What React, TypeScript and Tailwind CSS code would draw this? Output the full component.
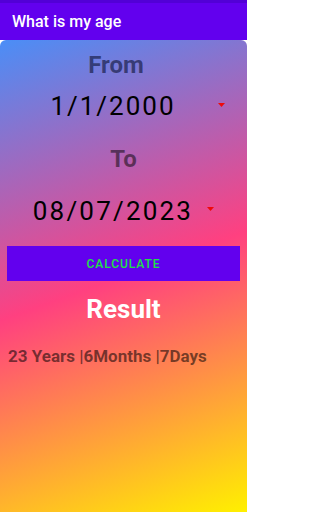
const font = { fontFamily: 'Roboto, "Noto Sans", sans-serif' }

function Caret() {
  return (
    <svg width="7" height="4" viewBox="0 0 7 4" className="shrink-0">
      <polygon points="0,0 7,0 3.5,4" fill="#ee0a0a" />
    </svg>
  )
}

export default function App() {
  return (
    <div style={font} className="w-[247px] h-[512px] bg-white flex flex-col overflow-hidden">
      {/* App bar */}
      <div className="h-[3px] bg-[#5200d6]" />
      <div className="h-[37px] bg-[#6200ee] px-3 pt-[9px]">
        <h1 className="text-[16px] leading-[19px] font-medium text-white">What is my age</h1>
      </div>

      {/* Card */}
      <div className="flex-1 rounded-t-[6px] bg-[linear-gradient(160deg,#4a8ef7_0%,#ff4080_50%,#fff000_100%)] flex flex-col">
        <p className="mt-[11px] pr-[15px] text-center text-[24px] leading-[28px] font-bold text-[#1a1f4a]/70">From</p>

        <div className="mt-[12px] flex items-start">
          <span className="w-[226px] text-center text-[26px] leading-[30px] tracking-[2px] text-black">1/1/2000</span>
          <span className="ml-[-8px] mt-[12px]"><Caret /></span>
        </div>

        <p className="mt-[24px] text-center text-[24px] leading-[28px] font-bold text-black/50">To</p>

        <div className="mt-[23px] flex items-start">
          <span className="w-[226px] text-center text-[26px] leading-[30px] tracking-[2.2px] text-black">08/07/2023</span>
          <span className="ml-[-19px] mt-[11px]"><Caret /></span>
        </div>

        <button className="mt-[20px] mx-[7px] h-[35px] bg-[#6200ee] text-[#1fe046] text-[12px] font-medium tracking-[0.08em] uppercase">
          Calculate
        </button>

        <p className="mt-[13px] text-center text-[26px] leading-[30px] font-bold text-white">Result</p>

        <p className="mt-[22px] px-2 text-[17px] leading-[20px] font-bold text-black/55">23 Years |6Months |7Days</p>
      </div>
    </div>
  )
}
